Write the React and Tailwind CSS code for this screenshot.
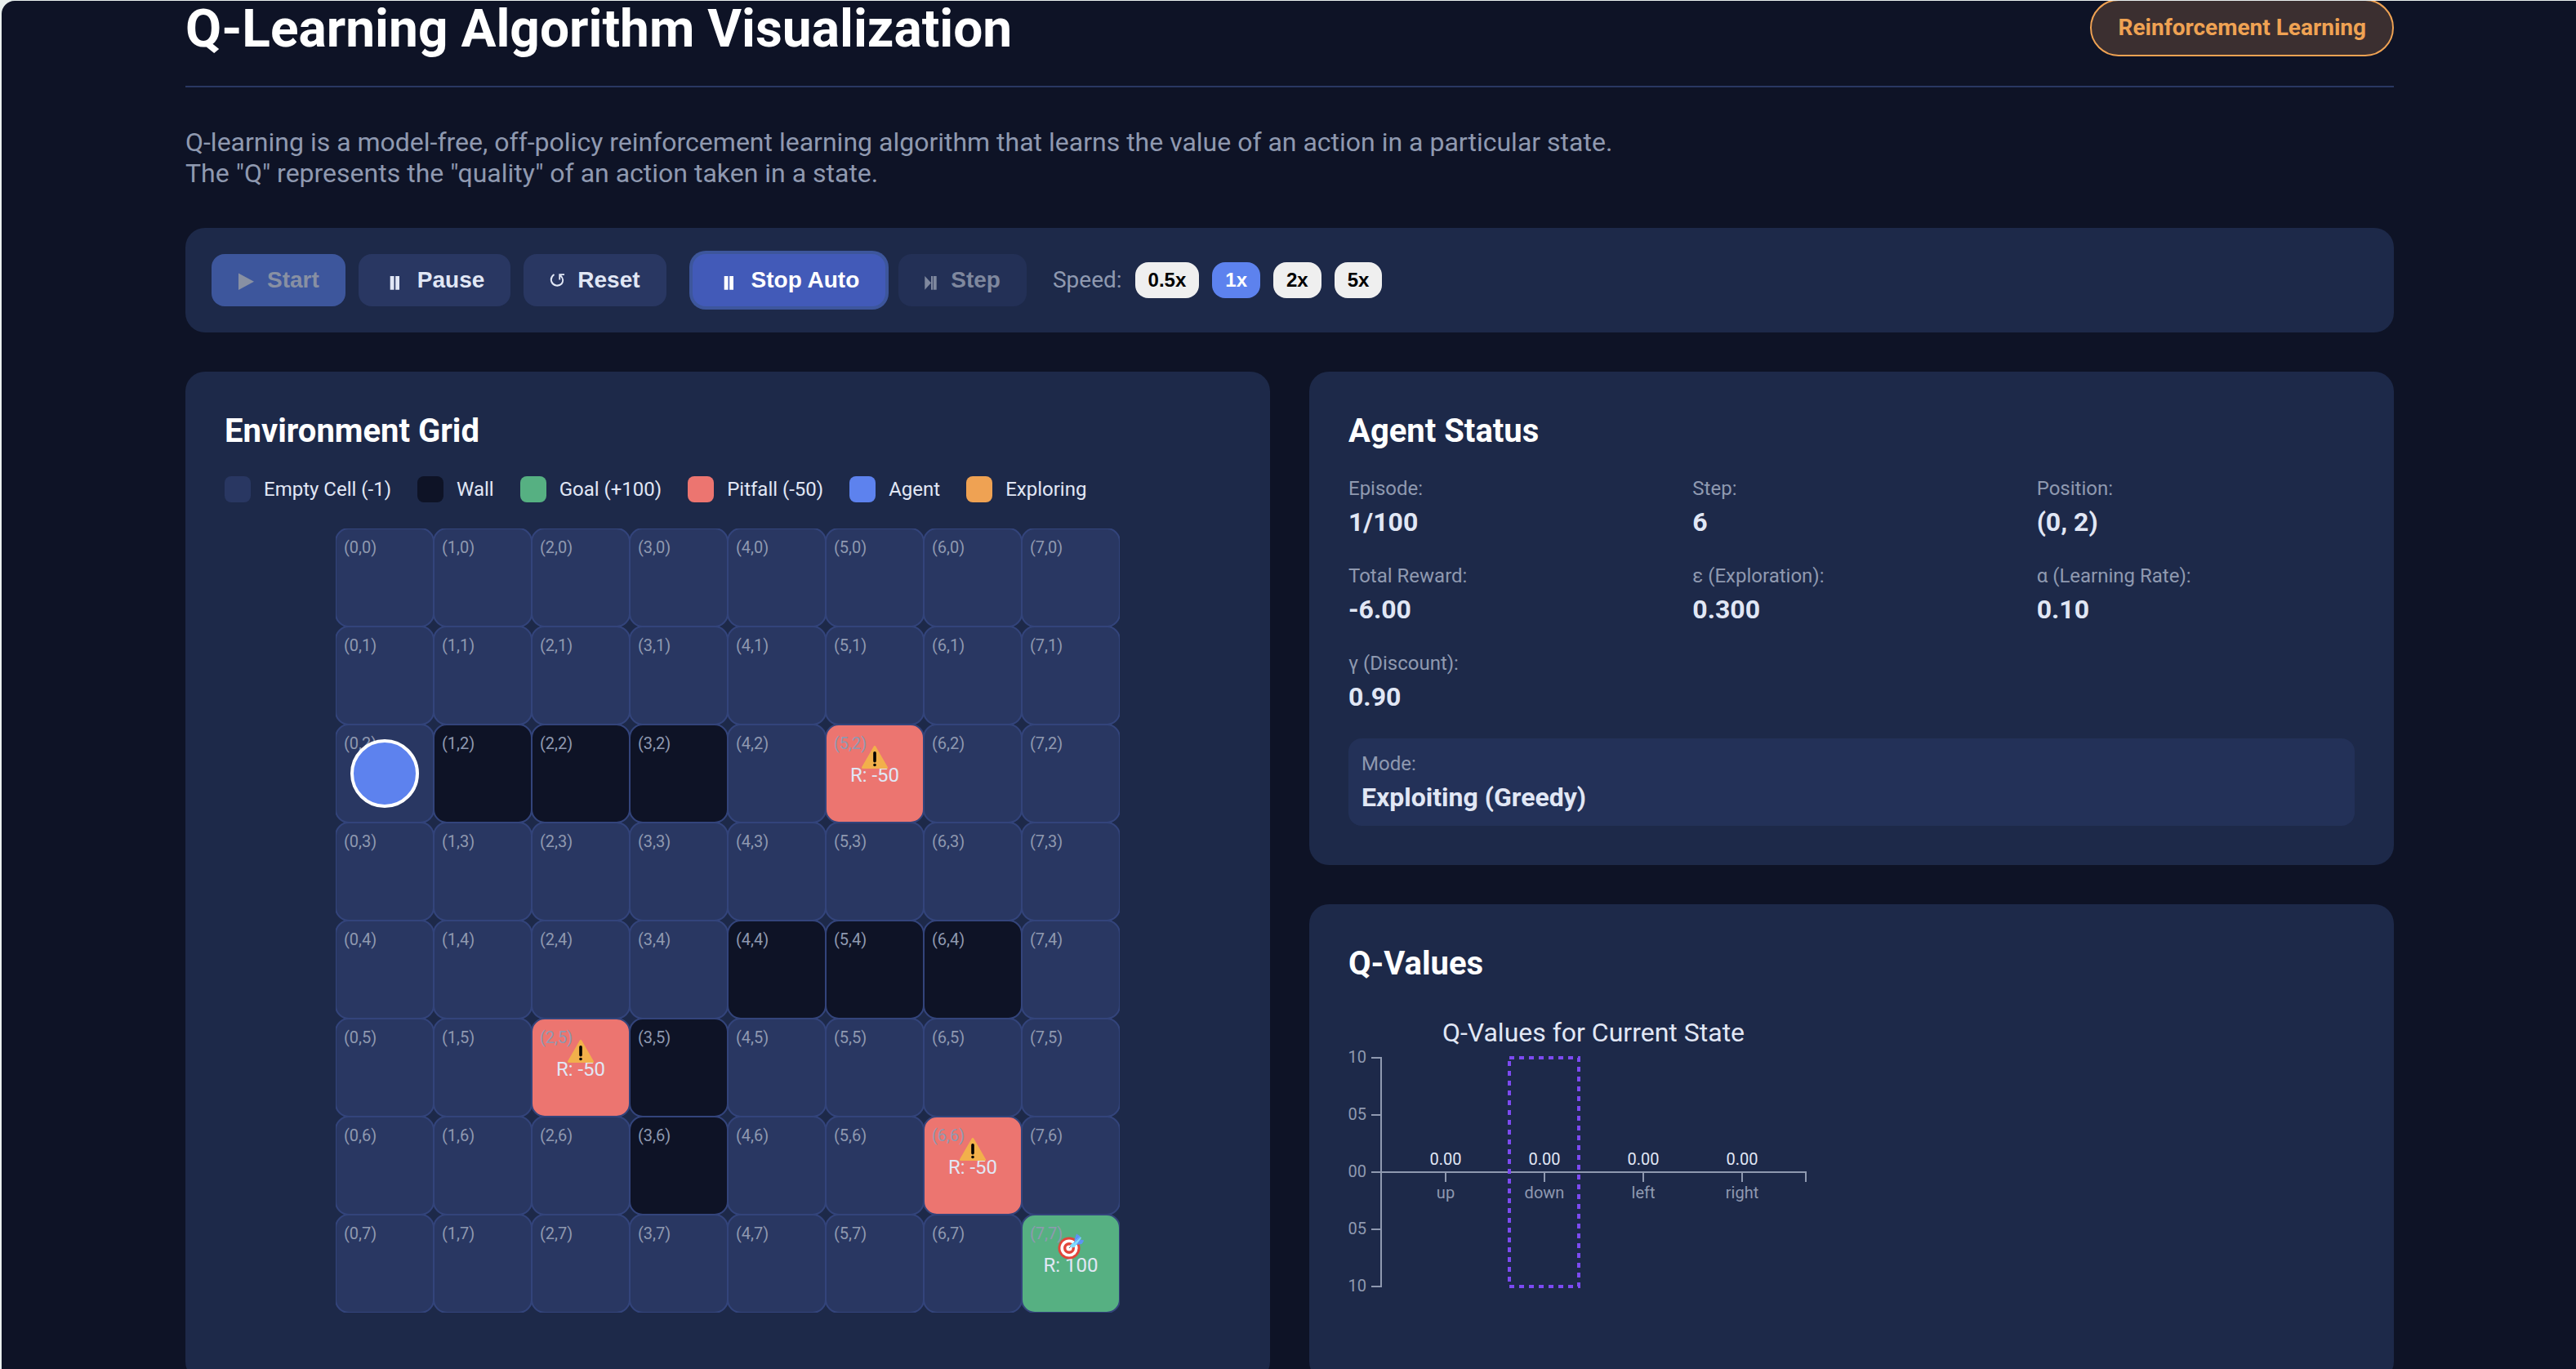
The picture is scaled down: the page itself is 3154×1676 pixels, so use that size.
const WALLS = ['1,2', '2,2', '3,2', '4,4', '5,4', '6,4', '3,5', '3,6'];
const PITFALLS = ['5,2', '2,5', '6,6'];
const GOAL = '7,7';
const AGENT = '0,2';

const LEGEND = [
  ['Empty Cell (-1)', 'bg-[#293762]'],
  ['Wall', 'bg-[#0e1326]'],
  ['Goal (+100)', 'bg-[#56b082]'],
  ['Pitfall (-50)', 'bg-[#ec7570]'],
  ['Agent', 'bg-[#5d82ee]'],
  ['Exploring', 'bg-[#efa253]'],
];

const STATS = [
  ['Episode:', '1/100'],
  ['Step:', '6'],
  ['Position:', '(0, 2)'],
  ['Total Reward:', '-6.00'],
  ['ε (Exploration):', '0.300'],
  ['α (Learning Rate):', '0.10'],
  ['γ (Discount):', '0.90'],
];

function PlayIcon() {
  return (
    <svg className="h-6 w-5" viewBox="0 0 20 24" fill="currentColor" aria-hidden="true">
      <path d="M1 3.5v20.5L20 13.7z" />
    </svg>
  );
}

function PauseIcon() {
  return (
    <svg className="h-6 w-6" viewBox="0 0 24 24" fill="currentColor" aria-hidden="true">
      <path d="M6.7 7h4.8v16.7H6.7zM13.2 7H18v16.7h-4.8z" />
    </svg>
  );
}

function ResetIcon() {
  return (
    <svg className="h-6 w-[18px]" viewBox="0 0 18 24" fill="none" stroke="currentColor" aria-hidden="true">
      <path d="M5.5 5C2 7.500 1 11 2.600 14.500C4.600 19 11 20 14.500 16.500C17 13.500 16.500 9.500 13.200 6.300" strokeWidth="2" />
      <path d="M18 5.200H12.200V11.500" strokeWidth="1.800" />
    </svg>
  );
}

function StepIcon() {
  return (
    <svg className="h-6 w-4" viewBox="0 0 16 24" fill="currentColor" aria-hidden="true">
      <path d="M0.300 7v16.700l7.700-8.400zM8 7h2v16.700H8zM10.700 7h4v16.700h-4z" />
    </svg>
  );
}

function ControlButton({ icon, label, className, disabled }) {
  return (
    <button
      type="button"
      disabled={disabled}
      className={`flex h-16 items-center gap-4 rounded-2xl px-8 font-['Liberation_Sans',sans-serif] text-[28px] leading-8 font-bold ${className}`}
    >
      {icon}
      {label}
    </button>
  );
}

function SpeedButton({ label, active }) {
  return (
    <button
      type="button"
      aria-pressed={!!active}
      className={`h-11 rounded-2xl px-4 font-['Liberation_Sans',sans-serif] text-2xl leading-7 font-bold ${
        active ? 'bg-[#5d82ee] text-white' : 'bg-[#efefef] text-black'
      }`}
    >
      {label}
    </button>
  );
}

function Panel({ title, children }) {
  return (
    <section className="rounded-3xl bg-[#1d2949] p-12">
      <h2 className="mb-[30px] text-[40px] leading-[50px] font-bold text-white">{title}</h2>
      {children}
    </section>
  );
}

function WarningIcon() {
  return (
    <svg className="h-7 w-8" viewBox="0 0 32 28" aria-hidden="true">
      <path d="M14.6 0.9a1.6 1.6 0 0 1 2.8 0L31.8 26a1.3 1.3 0 0 1-1.2 2H1.4a1.3 1.3 0 0 1-1.2-2z" fill="#f2b04b" />
      <rect x="14.2" y="7" width="3.6" height="13.5" rx="1.8" fill="#000" />
      <circle cx="16" cy="23.5" r="1.8" fill="#000" />
    </svg>
  );
}

function TargetIcon() {
  return (
    <svg className="h-8 w-8" viewBox="0 0 32 32" aria-hidden="true">
      <circle cx="14" cy="18" r="13.5" fill="#e2453a" />
      <circle cx="14" cy="18" r="10.6" fill="#fff" />
      <circle cx="14" cy="18" r="7" fill="#e2453a" />
      <circle cx="14" cy="18" r="3.6" fill="#fff" />
      <path d="M14 18L20 11" stroke="#5c6b78" strokeWidth="1" />
      <path d="M20.5 8L23 0.5l4 2.5 1 4.5 4.5 1-3 4.5-7.5 1z" fill="#5e93f5" />
      <path d="M15 14.5L27.5 4l1.5 1.5-8.5 11.5-3.5 0.5z" fill="#7fdcfd" />
      <path d="M20 11.5L28 4.5" stroke="#5e93f5" strokeWidth="1" />
    </svg>
  );
}

function Cell({ x, y }) {
  const id = `${x},${y}`;
  const wall = WALLS.includes(id);
  const pit = PITFALLS.includes(id);
  const goal = id === GOAL;
  const fill = wall ? 'bg-[#0e1326]' : pit ? 'bg-[#ec7570]' : goal ? 'bg-[#56b082]' : 'bg-[#293762]';
  return (
    <div className={`relative -m-px rounded-[17px] border-2 border-[#33447b] px-[9px] pt-2.5 ${fill}`}>
      <div className="text-xl leading-6 text-[#8f99b0]">({id})</div>
      {(pit || goal) && (
        <>
          <span className="absolute inset-x-0 top-[47px] text-center text-2xl leading-7 text-[#e1e7f5]">
            {goal ? 'R: 100' : 'R: -50'}
          </span>
          <span className={`absolute inset-x-0 flex justify-center ${goal ? 'top-[22px]' : 'top-[25px]'}`}>
            {goal ? <TargetIcon /> : <WarningIcon />}
          </span>
        </>
      )}
      {id === AGENT && (
        <span className="absolute inset-0 m-auto size-[84px] rounded-full border-4 border-white bg-[#5d82ee]" />
      )}
    </div>
  );
}

function EnvironmentGrid() {
  const cells = [];
  for (let y = 0; y < 8; y++) for (let x = 0; x < 8; x++) cells.push(<Cell key={`${x},${y}`} x={x} y={y} />);
  return (
    <div className="mx-auto grid w-fit auto-rows-[120px] grid-cols-[repeat(8,120px)] overflow-hidden">{cells}</div>
  );
}

function Stat({ label, value }) {
  return (
    <div>
      <dt className="mb-1.5 text-2xl leading-[31px] text-[#8f99b0]">{label}</dt>
      <dd className="text-[32px] leading-[38px] font-bold text-[#e1e7f5]">{value}</dd>
    </div>
  );
}

function QChart() {
  const yTicks = [
    [60, '10'],
    [130, '05'],
    [200, '00'],
    [270, '05'],
    [340, '10'],
  ];
  const bars = [
    [119, 'up'],
    [240, 'down'],
    [361, 'left'],
    [482, 'right'],
  ];
  return (
    <svg
      className="mb-2 block h-[400px] w-[600px]"
      viewBox="0 0 600 400"
      fontSize="20"
      role="img"
      aria-label="Q-Values for Current State"
    >
      <text x="300" y="40" textAnchor="middle" fontSize="32" fill="#e1e7f5">
        Q-Values for Current State
      </text>
      <g stroke="#8f99b0" strokeWidth="2" fill="none">
        <path d="M28 60H40V340H28" />
        <path d="M40 200H560V212" />
        {yTicks.slice(1, 4).map(([y]) => (
          <path key={y} d={`M28 ${y}H40`} />
        ))}
        {bars.map(([x]) => (
          <path key={x} d={`M${x} 200V212`} />
        ))}
      </g>
      {yTicks.map(([y, t]) => (
        <text key={y} x="22" y={y + 6} textAnchor="end" fill="#8f99b0">
          {t}
        </text>
      ))}
      {bars.map(([x, name]) => (
        <g key={name} textAnchor="middle">
          <text x={x} y="191" fill="#e1e7f5">
            0.00
          </text>
          <text x={x} y="232" fill="#8f99b0">
            {name}
          </text>
        </g>
      ))}
      <rect x="197" y="60" width="85" height="280" fill="none" stroke="#7c4af2" strokeWidth="4" strokeDasharray="6 6" />
    </svg>
  );
}

export default function App() {
  return (
    <div className="h-screen overflow-hidden bg-[#e9efee] pt-px pl-0.5 font-[Roboto,sans-serif]">
      <div className="h-full overflow-hidden rounded-tl-2xl bg-[#0e1326] pl-0.5">
        <div className="mx-auto max-w-[2800px] px-12">
          <header className="-mt-0.5 flex items-center justify-between border-b-2 border-[#293762] pb-9">
            <h1 className="pt-1 text-[64px] leading-[66px] font-bold text-white">Q-Learning Algorithm Visualization</h1>
            <span className="rounded-full border-2 border-[#efa253] bg-[#3b2f30] px-8 py-4 text-[28px] leading-[34px] font-bold text-[#efa253]">
              Reinforcement Learning
            </span>
          </header>

          <p className="mt-12 max-w-[1800px] text-[32px] leading-[38px] text-[#8f99b0]">
            Q-learning is a model-free, off-policy reinforcement learning algorithm that learns the value of an action in
            a particular state. The "Q" represents the "quality" of an action taken in a state.
          </p>

          <div className="mt-12 flex items-center gap-8 rounded-3xl bg-[#1d2949] p-8">
            <div className="flex gap-4">
              <ControlButton icon={<PlayIcon />} label="Start" disabled className="bg-[#3d569c] text-[#8890a3]" />
              <ControlButton icon={<PauseIcon />} label="Pause" className="bg-[#293762] text-[#e1e7f5]" />
              <ControlButton icon={<ResetIcon />} label="Reset" className="bg-[#293762] text-[#e1e7f5]" />
            </div>
            <div className="flex gap-4">
              <ControlButton icon={<PauseIcon />} label="Stop Auto" className="bg-[#425ab8] text-white ring-4 ring-[#3d569c]" />
              <ControlButton icon={<StepIcon />} label="Step" disabled className="bg-[#233056] text-[#7f889e]" />
            </div>
            <div className="flex items-center gap-4">
              <span className="text-[28px] leading-8 text-[#8f99b0]">Speed:</span>
              <SpeedButton label="0.5x" />
              <SpeedButton label="1x" active />
              <SpeedButton label="2x" />
              <SpeedButton label="5x" />
            </div>
          </div>

          <main className="mt-12 grid grid-cols-2 gap-12">
            <Panel title="Environment Grid">
              <ul className="mb-8 flex flex-wrap gap-8">
                {LEGEND.map(([label, color]) => (
                  <li key={label} className="flex items-center gap-4 text-2xl leading-8 text-[#e1e7f5]">
                    <span className={`size-8 rounded-lg ${color}`} />
                    {label}
                  </li>
                ))}
              </ul>
              <EnvironmentGrid />
            </Panel>

            <div className="flex flex-col gap-12">
              <Panel title="Agent Status">
                <dl className="grid grid-cols-3 gap-8">
                  {STATS.map(([label, value]) => (
                    <Stat key={label} label={label} value={value} />
                  ))}
                  <div className="col-span-3 rounded-2xl bg-[#233158] p-4">
                    <Stat label="Mode:" value="Exploiting (Greedy)" />
                  </div>
                </dl>
              </Panel>
              <Panel title="Q-Values">
                <QChart />
              </Panel>
            </div>
          </main>
        </div>
      </div>
    </div>
  );
}
